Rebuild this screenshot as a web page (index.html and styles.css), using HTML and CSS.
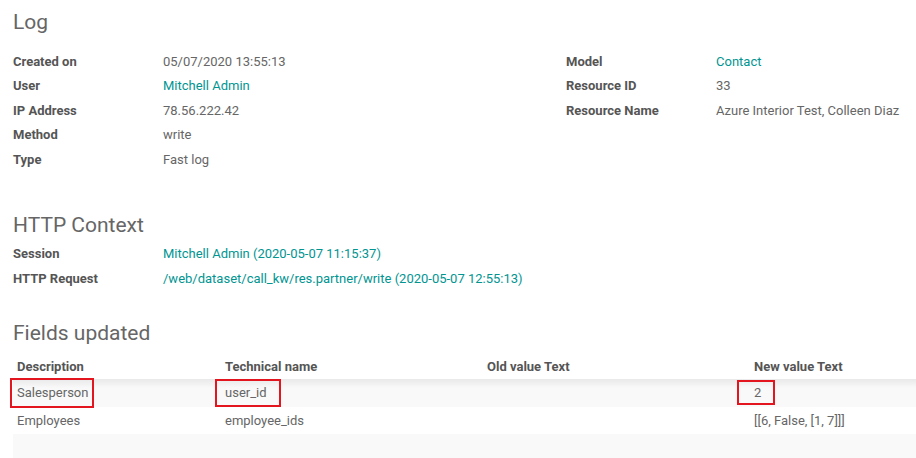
FILE: index.html
```html
<!DOCTYPE html>
<html>
<head>
<meta charset="utf-8">
<link rel="stylesheet" href="styles.css">
</head>
<body>
<div class="sheet">
  <h2 class="title title-log">Log</h2>
  <div class="groups">
    <div class="group">
      <div class="row"><span class="label">Created on</span><span class="value">05/07/2020 13:55:13</span></div>
      <div class="row"><span class="label">User</span><span class="value link">Mitchell Admin</span></div>
      <div class="row"><span class="label">IP Address</span><span class="value">78.56.222.42</span></div>
      <div class="row"><span class="label">Method</span><span class="value">write</span></div>
      <div class="row"><span class="label">Type</span><span class="value">Fast log</span></div>
    </div>
    <div class="group">
      <div class="row"><span class="label">Model</span><span class="value link">Contact</span></div>
      <div class="row"><span class="label">Resource ID</span><span class="value">33</span></div>
      <div class="row"><span class="label">Resource Name</span><span class="value">Azure Interior Test, Colleen Diaz</span></div>
    </div>
  </div>

  <h2 class="title title-http">HTTP Context</h2>
  <div class="group">
    <div class="row"><span class="label">Session</span><span class="value link">Mitchell Admin (2020-05-07 11:15:37)</span></div>
    <div class="row"><span class="label">HTTP Request</span><span class="value link">/web/dataset/call_kw/res.partner/write (2020-05-07 12:55:13)</span></div>
  </div>

  <h2 class="title title-fields">Fields updated</h2>
  <table class="list">
    <colgroup>
      <col class="c1"><col class="c2"><col class="c3"><col class="c4">
    </colgroup>
    <thead>
      <tr><th>Description</th><th>Technical name</th><th>Old value Text</th><th>New value Text</th></tr>
    </thead>
    <tbody>
      <tr class="first"><td><span class="mark m1">Salesperson</span></td><td><span class="mark m2">user_id</span></td><td></td><td><span class="mark m3">2</span></td></tr>
      <tr><td>Employees</td><td>employee_ids</td><td></td><td>[[6, False, [1, 7]]]</td></tr>
      <tr class="empty"><td></td><td></td><td></td><td></td></tr>
    </tbody>
  </table>
</div>
</body>
</html>
```

FILE: styles.css
```css
html, body {
  margin: 0;
  padding: 0;
  background: #fff;
}
body {
  font-family: Roboto, "Liberation Sans", sans-serif;
  font-size: 13px;
  color: #666;
  overflow: hidden;
}
.sheet {
  padding-left: 13px;
}
.title {
  margin: 0;
  font-size: 21px;
  font-weight: 400;
  line-height: 28px;
  color: #666;
}
.title-log { padding-top: 8px; margin-bottom: 13px; }
.title-http { margin-top: 39px; margin-bottom: 3px; }
.title-fields { margin-top: 28px; margin-bottom: 6.5px; }

.groups {
  display: grid;
  grid-template-columns: 553px 1fr;
}
.row {
  display: flex;
  height: 24.5px;
  align-items: center;
}
.label {
  width: 150px;
  flex: none;
  font-weight: 700;
  color: #555;
}
.value {
  color: #666;
  white-space: nowrap;
}
.link {
  color: #019592;
}

.list {
  width: 903px;
  border-collapse: collapse;
  table-layout: fixed;
}
.c1 { width: 208px; }
.c2 { width: 262px; }
.c3 { width: 267px; }
.c4 { width: auto; }
.list th {
  text-align: left;
  font-weight: 700;
  color: #555;
  height: 26px;
  padding: 0 4px;
  vertical-align: middle;
}
.list td {
  height: 27.5px;
  padding: 0 4px;
  vertical-align: middle;
  color: #666;
  white-space: nowrap;
}
.list tr.first td {
  background: linear-gradient(to bottom, #e9e9e9 0, #f9f9f9 9px, #f9f9f9 100%);
}
.list tr.empty td {
  background: #f9f9f9;
}
.mark {
  display: inline-block;
  border: 2px solid #e3161f;
  line-height: 15px;
  vertical-align: middle;
  margin-top: -3px;
  margin-bottom: -3px;
}
.m1 { padding: 5px 4px 6px 5px; margin-left: -7px; }
.m2 { padding: 4px 12px 5px 8px; margin-left: -10px; }
.m3 { padding: 3px 12px 3px 15px; margin-left: -17px; }
```
